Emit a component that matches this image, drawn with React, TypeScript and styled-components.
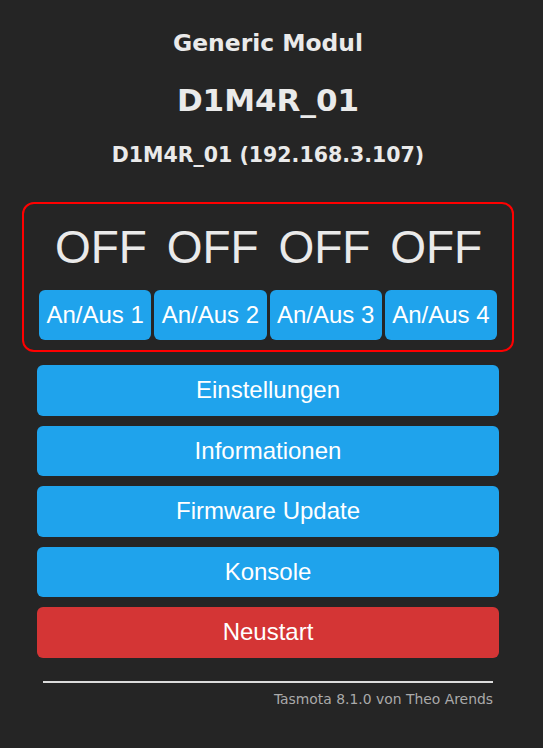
import React from "react";
import styled, { createGlobalStyle } from "styled-components";

const Global = createGlobalStyle`
  html, body {
    margin: 0;
    padding: 0;
    background: #252525;
  }
  body {
    min-height: 748px;
    font-family: "DejaVu Sans", Verdana, sans-serif;
    color: #eaeaea;
  }
`;

const Page = styled.div`
  width: 536px;
  display: flex;
  flex-direction: column;
  align-items: center;
  padding-top: 29px;
  box-sizing: border-box;
`;

const Heading = styled.div<{ $size: number; $lh: number; $mb: number }>`
  font-family: "DejaVu Sans", Verdana, sans-serif;
  font-weight: bold;
  font-size: ${(p) => p.$size}px;
  line-height: ${(p) => p.$lh}px;
  margin-bottom: ${(p) => p.$mb}px;
  color: #eaeaea;
  text-align: center;
  white-space: nowrap;
`;

const StateFrame = styled.div`
  width: 492px;
  box-sizing: border-box;
  border: 2px solid #f00;
  border-radius: 12px;
  padding: 16px 15px 10px;
  display: flex;
  flex-direction: column;
  gap: 16px;
`;

const StateRow = styled.div`
  display: grid;
  grid-template-columns: repeat(4, 1fr);
  padding: 0 5px 0 6px;
`;

const StateCell = styled.div`
  font-family: "Liberation Sans", Arial, sans-serif;
  font-size: 46px;
  line-height: 54px;
  font-weight: normal;
  text-align: center;
  color: #eaeaea;
`;

const ToggleRow = styled.div`
  display: grid;
  grid-template-columns: repeat(4, 1fr);
  gap: 3px;
`;

const Button = styled.button<{ $danger?: boolean; $h: number }>`
  display: block;
  width: 100%;
  height: ${(p) => p.$h}px;
  border: 0;
  border-radius: 6px;
  padding: 0;
  margin: 0;
  background: ${(p) => (p.$danger ? "#d43535" : "#1fa3ec")};
  color: #fff;
  font-family: "Liberation Sans", Arial, sans-serif;
  font-size: 24px;
  line-height: ${(p) => p.$h}px;
  text-align: center;
  white-space: nowrap;
  cursor: pointer;
`;

const Menu = styled.div`
  width: 462px;
  margin-top: 13px;
  display: flex;
  flex-direction: column;
  gap: 10px;
`;

const Footer = styled.div`
  width: 450px;
  margin-top: 23px;
  text-align: right;
`;

const Rule = styled.div`
  height: 2px;
  background: #dcdcdc;
  margin-bottom: 8px;
`;

const Credit = styled.div`
  font-family: "DejaVu Sans", Verdana, sans-serif;
  font-size: 13.9px;
  line-height: 16px;
  color: #aaaaaa;
`;

const menuItems = [
  { label: "Einstellungen" },
  { label: "Informationen" },
  { label: "Firmware Update" },
  { label: "Konsole" },
  { label: "Neustart", danger: true },
];

export default function App() {
  return (
    <>
      <Global />
      <Page>
        <Heading $size={23.4} $lh={28} $mb={25}>
          Generic Modul
        </Heading>
        <Heading $size={31} $lh={36} $mb={25}>
          D1M4R_01
        </Heading>
        <Heading $size={20.5} $lh={25} $mb={34}>
          D1M4R_01 (192.168.3.107)
        </Heading>
        <StateFrame>
          <StateRow>
            {[1, 2, 3, 4].map((i) => (
              <StateCell key={i}>OFF</StateCell>
            ))}
          </StateRow>
          <ToggleRow>
            {[1, 2, 3, 4].map((i) => (
              <Button key={i} $h={50}>
                An/Aus {i}
              </Button>
            ))}
          </ToggleRow>
        </StateFrame>
        <Menu>
          {menuItems.map((m) => (
            <Button key={m.label} $h={50.5} $danger={m.danger}>
              {m.label}
            </Button>
          ))}
        </Menu>
        <Footer>
          <Rule />
          <Credit>Tasmota 8.1.0 von Theo Arends</Credit>
        </Footer>
      </Page>
    </>
  );
}
